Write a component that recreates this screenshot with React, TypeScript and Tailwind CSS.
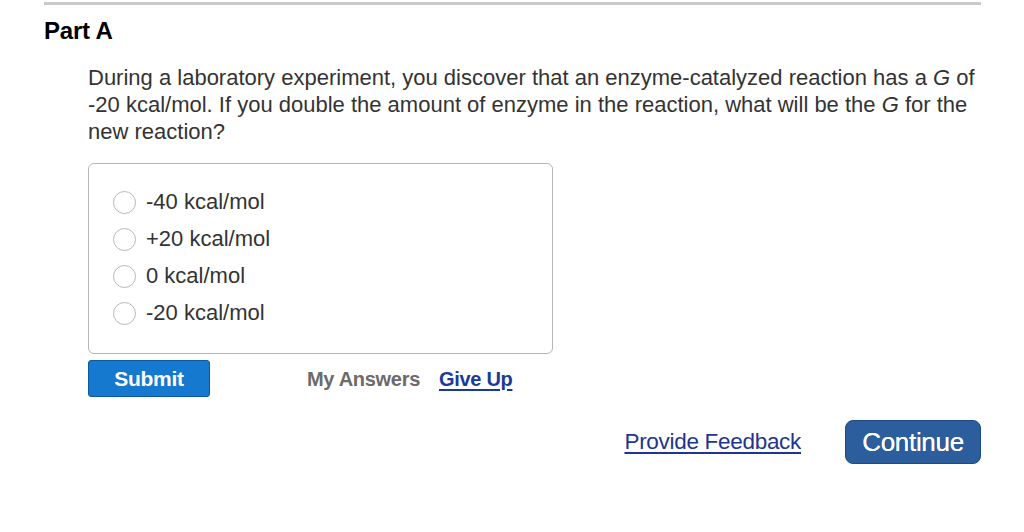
export default function App() {
  const options = ['-40 kcal/mol', '+20 kcal/mol', '0 kcal/mol', '-20 kcal/mol'];

  return (
    <div
      className="h-[532px] w-[1024px] bg-white text-[#222]"
      style={{ fontFamily: '"Liberation Sans", Arial, sans-serif' }}
    >
      <div className="ml-[44px] w-[937px] pt-[2px]">
        {/* top rule */}
        <div className="h-[3px] bg-[#c9c9c9]" />

        <h2 className="mt-[12px] text-[24px] font-bold leading-[28px] tracking-[-0.2px] text-black">Part A</h2>

        <div className="ml-[44px]">
          <p className="mt-[19px] whitespace-nowrap text-[22px] leading-[27px] text-[#333]">
            During a laboratory experiment, you discover that an enzyme-catalyzed reaction has a <i>G</i> of
            <br />
            -20 kcal/mol. If you double the amount of enzyme in the reaction, what will be the <i>G</i> for the
            <br />
            new reaction?
          </p>

          {/* options */}
          <div className="mt-[18px] flex h-[191px] w-[465px] flex-col gap-[15px] rounded-[6px] border border-[#b5b5b5] pl-[24px] pt-[27px]">
            {options.map((o) => (
              <label key={o} className="flex h-[22px] items-center gap-[10px]">
                <span className="h-[23px] w-[23px] shrink-0 rounded-full border-[1.5px] border-[#b8b8b8] bg-white" />
                <span className="text-[22px] leading-[22px] text-[#333]">{o}</span>
              </label>
            ))}
          </div>

          {/* actions */}
          <div className="mt-[6px] flex items-center">
            <button className="h-[37px] w-[122px] rounded-[3px] border border-[#0e5a9f] bg-[#1679d0] text-[21px] font-bold tracking-[-0.3px] text-white">
              Submit
            </button>
            <span className="ml-[97px] text-[20px] font-bold tracking-[-0.3px] text-[#6b6b6b]">My Answers</span>
            <a className="ml-[19px] text-[20px] font-bold tracking-[-0.3px] text-[#1a3a9a] underline underline-offset-[3px]">
              Give Up
            </a>
          </div>
        </div>

        {/* footer */}
        <div className="mt-[23px] flex items-center justify-end">
          <a className="text-[22.5px] tracking-[-0.3px] text-[#1f3590] underline underline-offset-[3px]">Provide Feedback</a>
          <button className="ml-[44px] h-[44px] w-[136px] rounded-[8px] border border-[#1f4b85] bg-[#2c5d9c] text-[26px] tracking-[-0.3px] text-white [text-shadow:0_0_0.4px_white]">
            Continue
          </button>
        </div>
      </div>
    </div>
  );
}
